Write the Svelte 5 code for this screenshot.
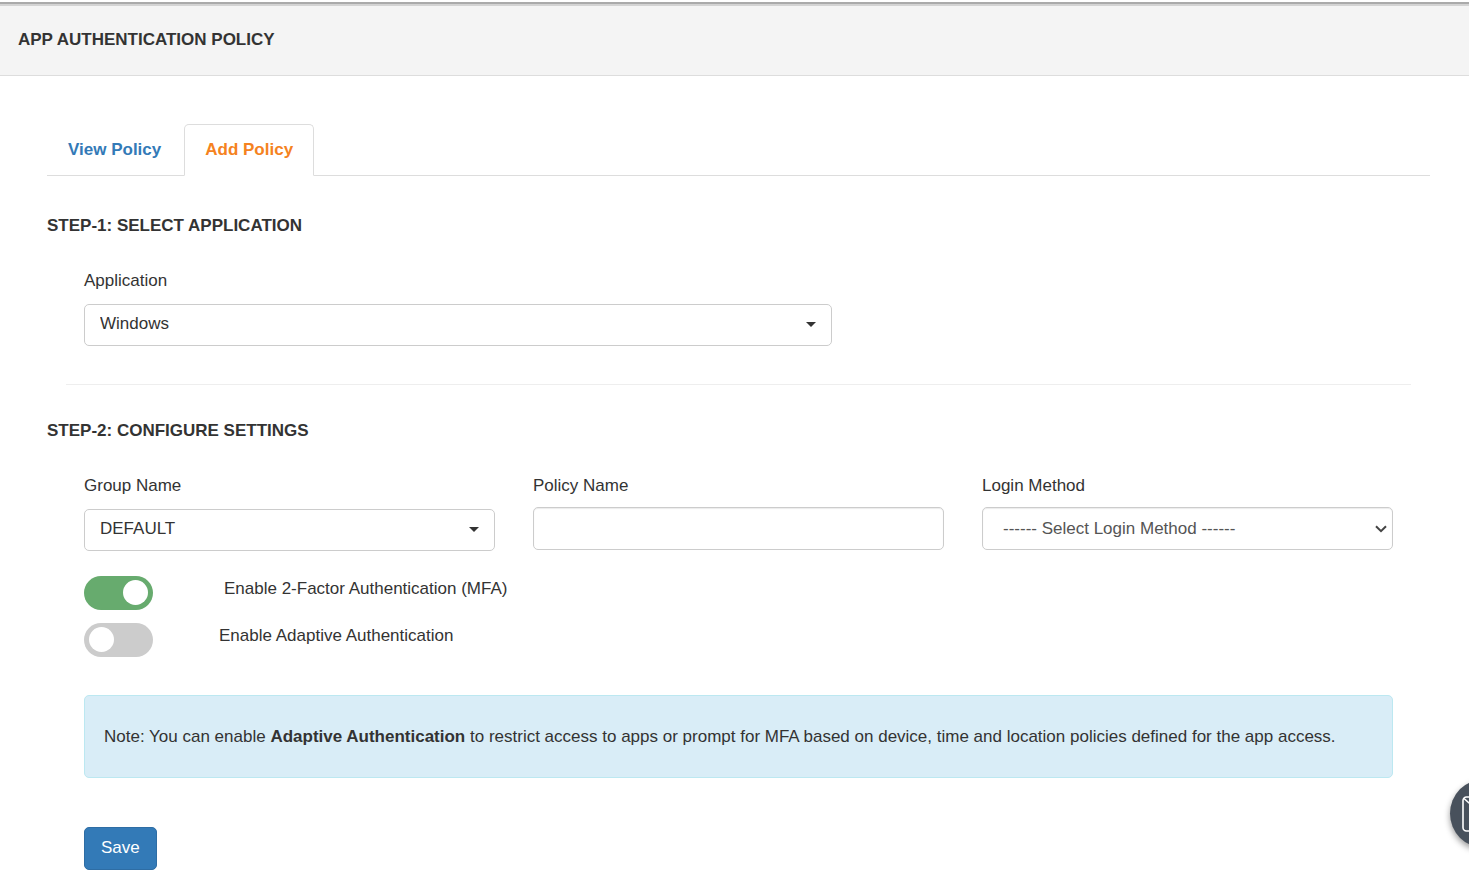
<script>
  let application = $state('Windows');
  let group = $state('DEFAULT');
  let policyName = $state('');
  let loginMethod = $state('');
  let mfa = $state(true);
  let adaptive = $state(false);
</script>

<div class="page">
  <header class="title-bar">
    <h1>APP AUTHENTICATION POLICY</h1>
  </header>

  <main>
    <nav class="tabs">
      <a href="#view">View Policy</a>
      <a href="#add" class="active" aria-current="page">Add Policy</a>
    </nav>

    <form onsubmit={(e) => e.preventDefault()}>
      <h2>STEP-1: SELECT APPLICATION</h2>
      <div class="fields">
        <div class="field wide picker">
          <label for="application">Application</label>
          <div class="select-box">
            <select id="application" bind:value={application}>
              <option>Windows</option>
            </select>
            <svg class="caret" width="10" height="7" viewBox="0 0 10 7" aria-hidden="true"><path d="M0 0h10L5 5z" fill="#333" /></svg>
          </div>
        </div>
      </div>

      <hr />

      <h2>STEP-2: CONFIGURE SETTINGS</h2>
      <div class="fields">
        <div class="field picker">
          <label for="group">Group Name</label>
          <div class="select-box">
            <select id="group" bind:value={group}>
              <option>DEFAULT</option>
            </select>
            <svg class="caret" width="10" height="7" viewBox="0 0 10 7" aria-hidden="true"><path d="M0 0h10L5 5z" fill="#333" /></svg>
          </div>
        </div>
        <div class="field">
          <label for="policy">Policy Name</label>
          <input id="policy" class="control" type="text" bind:value={policyName} />
        </div>
        <div class="field">
          <label for="method">Login Method</label>
          <div class="select-box">
            <select id="method" class="control" bind:value={loginMethod}>
              <option value="">------ Select Login Method ------</option>
            </select>
            <svg class="chevron" width="12" height="8" viewBox="0 0 12 8" aria-hidden="true"><path d="M1 1.2l5 5 5-5" fill="none" stroke="#444" stroke-width="2" /></svg>
          </div>
        </div>
      </div>

      <div class="toggles">
        <div class="toggle first">
          <input id="mfa" type="checkbox" bind:checked={mfa} />
          <label for="mfa">Enable 2-Factor Authentication (MFA)</label>
        </div>
        <div class="toggle">
          <input id="adaptive" type="checkbox" bind:checked={adaptive} />
          <label for="adaptive">Enable Adaptive Authentication</label>
        </div>
      </div>

      <p class="note">
        Note: You can enable <strong>Adaptive Authentication</strong> to restrict access to apps or prompt for MFA based on device, time and location policies defined for the app access.
      </p>

      <button class="save" type="submit">Save</button>
    </form>
  </main>

  <button class="contact" type="button" aria-label="Contact us">
    <svg width="46" height="36" viewBox="0 0 46 36" fill="none" stroke="#fff" stroke-width="1.6" aria-hidden="true">
      <rect x="1" y="1" width="44" height="34" rx="3.5" />
      <path d="M2 2.5l18 16q3 3 6 0L44 2.5" />
    </svg>
  </button>
</div>

<style>
  :global(body) {
    margin: 0;
    background: #fff;
    overflow-x: hidden;
  }
  .page {
    color: #333;
    font: 17px/25px "Liberation Sans", Arial, sans-serif;
  }
  .page * {
    box-sizing: border-box;
  }
  .title-bar {
    margin-top: 2px;
    padding: 23px 18px;
    border-top: 2px solid #aaa;
    border-bottom: 1px solid #ddd;
    background: #f4f4f4;
    box-shadow: inset 0 2px #d3d3d3;
  }
  h1,
  h2 {
    margin: 0;
    font-size: 17px;
    font-weight: bold;
    line-height: 25px;
  }
  main {
    padding: 48px 39px 7px 47px;
  }
  .tabs {
    display: flex;
    border-bottom: 1px solid #ddd;
  }
  .tabs a {
    margin-bottom: -1px;
    padding: 12px 20px 13px;
    border: 1px solid transparent;
    border-radius: 5px 5px 0 0;
    color: #337ab7;
    font-weight: bold;
    text-decoration: none;
  }
  .tabs a + a {
    margin-left: 2px;
  }
  .tabs .active {
    border-color: #ddd #ddd #fff;
    background: #fff;
    color: #f58220;
  }
  form {
    padding-top: 37px;
  }
  .fields {
    display: grid;
    grid-template-columns: repeat(12, minmax(0, 1fr));
    column-gap: 38px;
    margin: 30px 37px 0;
  }
  .field {
    grid-column: span 4;
  }
  .wide {
    grid-column: span 7;
  }
  .field label {
    display: block;
    margin-bottom: 9px;
  }
  .picker label {
    margin-bottom: 11px;
  }
  .select-box {
    display: grid;
    align-items: center;
  }
  .select-box > * {
    grid-area: 1 / 1;
  }
  select,
  .control {
    display: block;
    width: 100%;
    height: 42px;
    margin: 0;
    padding: 0 15px 4px;
    border: 1px solid #ccc;
    border-radius: 5px;
    background: #fff;
    color: #333;
    font: inherit;
    appearance: none;
  }
  .control {
    height: 43px;
    padding: 0 20px;
    color: #555;
    box-shadow: inset 0 1px 1px rgba(0, 0, 0, 0.08);
  }
  .caret,
  .chevron {
    justify-self: end;
    margin-right: 16px;
    pointer-events: none;
  }
  .chevron {
    margin-right: 6px;
  }
  hr {
    margin: 38px 19px 33px;
    border: 0;
    border-top: 1px solid #eee;
  }
  .toggles {
    display: grid;
    gap: 13px;
    margin: 25px 37px 0;
  }
  .toggle {
    display: flex;
    gap: 66px;
  }
  .first {
    gap: 71px;
  }
  .toggle input {
    width: 69px;
    height: 34px;
    margin: 0;
    padding: 4px 5px;
    border-radius: 17px;
    background: #ccc;
    appearance: none;
  }
  .toggle input::before {
    content: "";
    display: block;
    width: 25px;
    height: 25px;
    border-radius: 50%;
    background: #fff;
  }
  .toggle input:checked {
    background: #67ab6e;
  }
  .toggle input:checked::before {
    margin-left: auto;
  }
  .note {
    margin: 38px 37px 49px;
    padding: 28px 19px;
    border: 1px solid #bce8f1;
    border-radius: 5px;
    background: #d9edf7;
  }
  .save {
    display: block;
    height: 43px;
    margin-left: 37px;
    padding: 0 16px 2px;
    border: 1px solid #2e6da4;
    border-radius: 5px;
    background: #337ab7;
    color: #fff;
    font: inherit;
  }
  .contact {
    position: fixed;
    right: -50px;
    bottom: 29px;
    display: grid;
    place-items: center;
    width: 69px;
    height: 69px;
    padding: 0;
    border: 0;
    border-radius: 50%;
    background: #48515c;
    box-shadow: 0 3px 6px rgba(0, 0, 0, 0.4);
  }
</style>
